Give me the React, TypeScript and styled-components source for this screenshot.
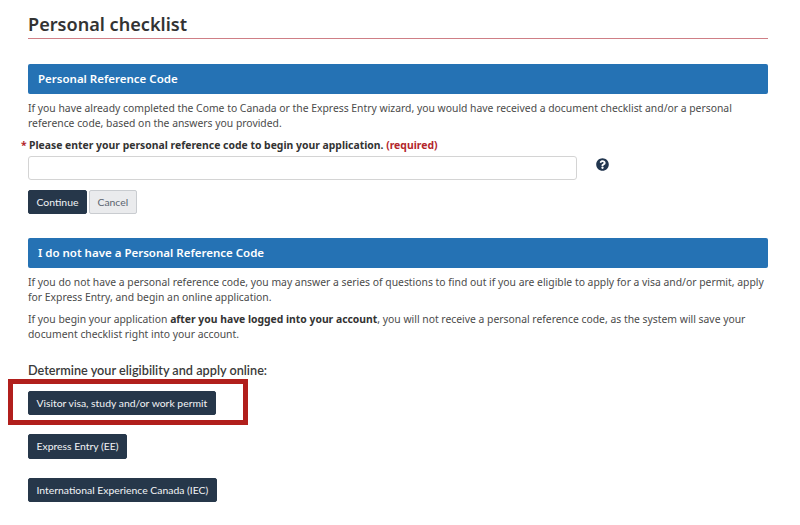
import styled, { createGlobalStyle } from "styled-components";
import { FaQuestionCircle } from "react-icons/fa";

const GlobalStyle = createGlobalStyle`
    html, body {
        margin: 0;
        padding: 0;
        background: #fff;
        font-family: "Noto Sans", "Open Sans", sans-serif;
    }
`;

const Page = styled.main`
    width: 740px;
    height: 525px;
    padding: 13px 32px 0 28px;
    overflow: hidden;
`;

const Title = styled.h1`
    margin: 0;
    height: 25px;
    border-bottom: 1px solid #cf7f86;
    font-size: 18.1px;
    line-height: 23px;
    font-weight: 600;
    color: #333;
`;

const Banner = styled.h2<{ $top: number }>`
    margin: ${(p) => p.$top}px 0 0;
    height: 30px;
    padding: 0 10px;
    border-radius: 2px;
    background: #2572b4;
    color: #fff;
    font-size: 11.5px;
    font-weight: 600;
    line-height: 30px;
`;

const Paragraph = styled.p<{ $top: number }>`
    margin: ${(p) => p.$top}px 0 0;
    font-size: 10.37px;
    line-height: 15px;
    color: #4b4b4b;

    strong {
        font-weight: 700;
        color: #333;
    }
`;

const Label = styled.label`
    position: relative;
    display: block;
    margin-top: 7px;
    padding-left: 1px;
    font-size: 10.4px;
    line-height: 15px;
    font-weight: 700;
    color: #333;
`;

const Star = styled.span`
    position: absolute;
    left: -7px;
    color: #b3262b;
`;

const Required = styled.span`
    color: #b3262b;
`;

const InputRow = styled.div`
    display: flex;
    align-items: center;
    margin-top: 3px;
`;

const TextInput = styled.input`
    box-sizing: border-box;
    width: 549px;
    height: 24px;
    border: 1px solid #d4d4d4;
    border-radius: 3px;
    background: #fff;
`;

const HelpIcon = styled(FaQuestionCircle)`
    width: 13px;
    height: 13px;
    margin: 0 0 8px 19px;
    color: #22364f;
`;

const ButtonRow = styled.div`
    display: flex;
    gap: 2px;
    margin-top: 10px;
`;

const Button = styled.button<{ $height?: number; $muted?: boolean }>`
    box-sizing: border-box;
    height: ${(p) => p.$height ?? 24}px;
    padding: 0 7.5px;
    border: 1px solid ${(p) => (p.$muted ? "#c9ccd0" : "#26374a")};
    border-radius: 2px;
    background: ${(p) => (p.$muted ? "#eaebed" : "#26374a")};
    color: ${(p) => (p.$muted ? "#5b6470" : "#f2f4f6")};
    font-family: "Lato", sans-serif;
    font-size: 10.4px;
    white-space: nowrap;
`;

const Subheading = styled.h3`
    margin: 21px 0 0;
    font-family: "Lato", sans-serif;
    font-size: 12.7px;
    line-height: 15px;
    font-weight: 600;
    color: #3a3a3a;
`;

const ApplyList = styled.div`
    display: flex;
    flex-direction: column;
    align-items: flex-start;
    margin-top: 12px;
`;

const ApplyItem = styled.div<{ $top?: number }>`
    position: relative;
    margin-top: ${(p) => p.$top ?? 0}px;
`;

const Highlight = styled.div`
    position: absolute;
    left: -20px;
    top: -11px;
    width: 240px;
    height: 46px;
    box-sizing: border-box;
    border: 5px solid #b11f1c;
    pointer-events: none;
`;

export default function App() {
    return (
        <Page>
            <GlobalStyle />
            <Title>Personal checklist</Title>

            <Banner $top={25}>Personal Reference Code</Banner>
            <Paragraph $top={7}>
                If you have already completed the Come to Canada or the Express Entry wizard, you
                would have received a document checklist and/or a personal reference code, based on
                the answers you provided.
            </Paragraph>
            <Label>
                <Star>*</Star> Please enter your personal reference code to begin your application.{" "}
                <Required>(required)</Required>
            </Label>
            <InputRow>
                <TextInput type="text" />
                <HelpIcon />
            </InputRow>
            <ButtonRow>
                <Button>Continue</Button>
                <Button $muted>Cancel</Button>
            </ButtonRow>

            <Banner $top={24}>I do not have a Personal Reference Code</Banner>
            <Paragraph $top={7}>
                If you do not have a personal reference code, you may answer a series of questions
                to find out if you are eligible to apply for a visa and/or permit, apply for Express
                Entry, and begin an online application.
            </Paragraph>
            <Paragraph $top={7}>
                If you begin your application <strong>after you have logged into your account</strong>,
                you will not receive a personal reference code, as the system will save your document
                checklist right into your account.
            </Paragraph>

            <Subheading>Determine your eligibility and apply online:</Subheading>
            <ApplyList>
                <ApplyItem>
                    <Button>Visitor visa, study and/or work permit</Button>
                    <Highlight />
                </ApplyItem>
                <ApplyItem $top={18}>
                    <Button $height={25}>Express Entry (EE)</Button>
                </ApplyItem>
                <ApplyItem $top={18}>
                    <Button>International Experience Canada (IEC)</Button>
                </ApplyItem>
            </ApplyList>
        </Page>
    );
}
